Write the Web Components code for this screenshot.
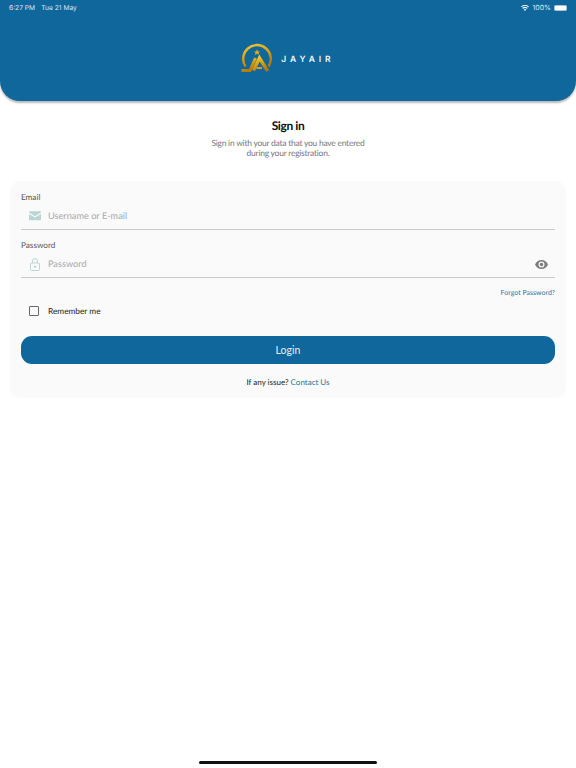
<!DOCTYPE html>
<html>
<head>
<meta charset="utf-8">
<title>Jayair</title>
<style>
    html, body { margin: 0; height: 100%; background: #fff; }
    body { font-family: Lato, "Liberation Sans", sans-serif; text-rendering: geometricPrecision; }
    .pagina { position: relative; height: 768px; overflow: hidden; display: flex; flex-direction: column; }
    .barra-home { position: absolute; left: 199px; bottom: 4px; width: 178px; height: 3px; border-radius: 2px; background: #111; }
</style>
</head>
<body>

<div class="pagina">
    <app-header></app-header>
    <signin-title titulo="Sign in">
        Sign in with your data that you have entered<br>during your registration.
    </signin-title>
    <login-card>
        <text-field label="Email" placeholder="Username or E-mail" icone="mail"></text-field>
        <text-field label="Password" placeholder="Password" icone="lock" olho></text-field>
    </login-card>
    <div class="barra-home"></div>
</div>

<script>
class StatusBar extends HTMLElement {
    constructor() {
        super();
        this.attachShadow({ mode: "open" });
    }

    connectedCallback() {
        this.shadowRoot.innerHTML = `
            <style>
                :host {
                    display: flex;
                    justify-content: space-between;
                    align-items: center;
                    height: 13px;
                    padding: 1px 9px 0 9px;
                    color: #dfeaf2;
                    font: 400 6.700px Inter, "Liberation Sans", sans-serif;
                }
                .lado { display: flex; align-items: center; }
                .data { margin-left: 6px; }
                .wifi { margin-right: 3px; }
                .cem { font-size: 7px; }
                .bateria {
                    margin-left: 3px;
                    width: 11px;
                    height: 4px;
                    background: #fff;
                    border-radius: 1.5px;
                    border: 1px solid #a9c6da;
                }
            </style>
            <div class="lado"><span>6:27 PM</span><span class="data"> Tue 21 May</span></div>
            <div class="lado">
                <svg class="wifi" width="8" height="6" viewBox="0 0 18 14">
                    <path fill="#fff" d="M9 14 6 10.6a4.4 4.4 0 0 1 6 0zM4.4 8.8 2.6 6.8a9.6 9.6 0 0 1 12.8 0l-1.8 2a7 7 0 0 0-9.2 0zM1.4 5.4 0 3.6a13.6 13.6 0 0 1 18 0l-1.4 1.8a11.4 11.4 0 0 0-15.2 0z"/>
                </svg>
                <span class="cem">100%</span>
                <span class="bateria"></span>
            </div>
        `;
    }
}

class AppHeader extends HTMLElement {
    constructor() {
        super();
        this.attachShadow({ mode: "open" });
    }

    connectedCallback() {
        this.shadowRoot.innerHTML = `
            <style>
                :host {
                    display: block;
                    height: 101px;
                    background: #10679c;
                    border-radius: 0 0 20px 20px;
                    box-shadow: 0 2px 2px rgba(0, 0, 0, 0.28);
                    flex: none;
                }
                .marca {
                    display: flex;
                    justify-content: center;
                    align-items: center;
                    gap: 8px;
                    padding: 29px 4px 0 0;
                }
                .nome {
                    color: #f1f6fa;
                    font: 600 8.500px Inter, "Liberation Sans", sans-serif;
                    letter-spacing: 3.900px;
                    margin: 3px -3.900px 0 0;
                }
            </style>
            <status-bar></status-bar>
            <div class="marca">
                <svg width="32" height="30" viewBox="0 0 32 30">
                    <defs>
                        <linearGradient id="ouro" x1="0" y1="0" x2="0.4" y2="1">
                            <stop offset="0" stop-color="#f4c935"/>
                            <stop offset="0.55" stop-color="#d99f12"/>
                            <stop offset="1" stop-color="#b87a08"/>
                        </linearGradient>
                    </defs>
                    <path d="M4.500 23.500A13.800 13.800 0 1 1 27.500 23.500" fill="none" stroke="url(#ouro)" stroke-width="2.400"/>
                    <path fill="#e2aa18" d="m16 6.200 1 2.200h2.300l-1.800 1.400.7 2.300-2.200-1.400-2.200 1.400.7-2.300-1.800-1.400h2.300z"/>
                    <path d="M0.500 27.500h8.500L14.500 15" fill="none" stroke="url(#ouro)" stroke-width="3"/>
                    <path d="M12.500 27.500 18.500 15 26.500 27.800" fill="none" stroke="url(#ouro)" stroke-width="3.400"/>
                    <path d="M15.500 25h5.500" stroke="#d99f12" stroke-width="2"/>
                </svg>
                <span class="nome">JAYAIR</span>
            </div>
        `;
    }
}

class SigninTitle extends HTMLElement {
    constructor() {
        super();
        this.attachShadow({ mode: "open" });
    }

    connectedCallback() {
        this.shadowRoot.innerHTML = `
            <style>
                :host {
                    display: block;
                    box-sizing: border-box;
                    text-align: center;
                    padding-top: 17px;
                    height: 80px;
                    flex: none;
                }
                h1 {
                    margin: 0 0 4.500px;
                    font-size: 12px;
                    line-height: 15px;
                    font-weight: 700;
                    letter-spacing: -0.400px;
                    color: #0c0c0c;
                }
                p {
                    margin: 0;
                    font-size: 8.500px;
                    line-height: 10.500px;
                    letter-spacing: -0.250px;
                    color: #77777e;
                }
            </style>
            <h1>${this.getAttribute("titulo")}</h1>
            <p><slot></slot></p>
        `;
    }
}

class TextField extends HTMLElement {
    constructor() {
        super();
        this.attachShadow({ mode: "open" });
    }

    connectedCallback() {
        const icones = {
            mail: `<svg width="12" height="9.500" viewBox="0 0 13 10">
                       <path fill="#b9d5d5" d="M1 0h11a1 1 0 0 1 1 1v.6L6.500 5.500 0 1.600V1a1 1 0 0 1 1-1zM0 3l6.500 3.900L13 3v6a1 1 0 0 1-1 1H1a1 1 0 0 1-1-1z"/>
                   </svg>`,
            lock: `<svg width="10" height="13" viewBox="0 0 10 13">
                       <path fill="none" stroke="#b9d5d5" stroke-width="1" d="M2.500 5V3a2.500 2.500 0 0 1 5 0V5M1.500 5h7a1 1 0 0 1 1 1v5.500a1 1 0 0 1-1 1h-7a1 1 0 0 1-1-1V6a1 1 0 0 1 1-1z"/>
                       <circle cx="5" cy="8.700" r="1" fill="#a9caca"/>
                   </svg>`
        };

        const olho = this.hasAttribute("olho") ? `
            <svg class="olho" width="13" height="9" viewBox="0 0 13 9">
                <path fill="#7d7d7d" fill-rule="evenodd" d="M6.500 0C9.500 0 12 1.900 13 4.500 12 7.100 9.500 9 6.500 9S1 7.100 0 4.500C1 1.900 3.500 0 6.500 0zm0 1.500a3 3 0 1 0 0 6 3 3 0 0 0 0-6zm0 1.200a1.800 1.800 0 1 1 0 3.600 1.800 1.800 0 0 1 0-3.600z"/>
            </svg>` : "";

        this.shadowRoot.innerHTML = `
            <style>
                :host {
                    display: block;
                    color: #555;
                }
                .rotulo {
                    font-size: 8.200px;
                    line-height: 11px;
                    display: block;
                }
                .linha {
                    display: flex;
                    align-items: center;
                    height: 26px;
                    padding: 0 7px 0 7px;
                    border-bottom: 1px solid #c9c9c9;
                }
                .icone {
                    width: 13px;
                    display: flex;
                    justify-content: center;
                    margin-right: 7px;
                }
                .dica {
                    flex: 1;
                    font-size: 9.200px;
                    margin-top: -2px;
                    color: #a9a9a9;
                }
                .olho { margin-top: 1px; }
            </style>
            <span class="rotulo">${this.getAttribute("label")}</span>
            <div class="linha">
                <span class="icone">${icones[this.getAttribute("icone")]}</span>
                <span class="dica">${this.getAttribute("placeholder")}</span>
                ${olho}
            </div>
        `;
    }
}

class LoginCard extends HTMLElement {
    constructor() {
        super();
        this.attachShadow({ mode: "open" });
    }

    connectedCallback() {
        this.shadowRoot.innerHTML = `
            <style>
                :host {
                    display: block;
                    flex: none;
                    margin: 0 10px;
                    padding: 11px 11px 0;
                    height: 206px;
                    background: #fafafa;
                    border-radius: 10px;
                }
                .campos {
                    display: flex;
                    flex-direction: column;
                    gap: 10px;
                }
                .esqueci {
                    display: block;
                    text-align: right;
                    margin-top: 10px;
                    font-size: 7px;
                    line-height: 11px;
                    color: #2a78a8;
                }
                .lembrar {
                    display: flex;
                    align-items: center;
                    gap: 9px;
                    margin: 6px 0 0 8px;
                    font-size: 8.300px;
                    line-height: 12px;
                    color: #222;
                }
                .caixa {
                    width: 8px;
                    height: 8px;
                    border: 1px solid #666;
                    border-radius: 1px;
                }
                button {
                    display: block;
                    width: 100%;
                    height: 28px;
                    margin-top: 18.500px;
                    border: none;
                    border-radius: 11px;
                    background: #10679c;
                    color: #e6eff5;
                    font: 10.500px Lato, "Liberation Sans", sans-serif;
                }
                .ajuda {
                    text-align: center;
                    margin-top: 12.500px;
                    font-size: 8px;
                    line-height: 12px;
                    color: #222;
                }
                .ajuda a { color: #1f74a6; }
            </style>
            <div class="campos"><slot></slot></div>
            <a class="esqueci">Forgot Password?</a>
            <div class="lembrar"><span class="caixa"></span><span>Remember me</span></div>
            <button>Login</button>
            <div class="ajuda">If any issue? <a>Contact Us</a></div>
        `;
    }
}

customElements.define("status-bar", StatusBar);
customElements.define("app-header", AppHeader);
customElements.define("signin-title", SigninTitle);
customElements.define("text-field", TextField);
customElements.define("login-card", LoginCard);
</script>
</body>
</html>
